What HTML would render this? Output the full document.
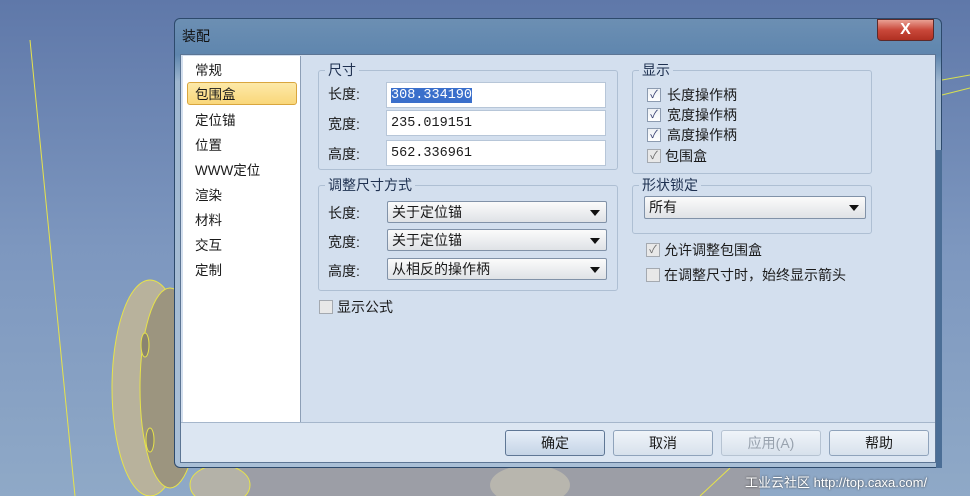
<!DOCTYPE html><html><head><meta charset="utf-8"><style>
*{margin:0;padding:0;box-sizing:border-box}
body{width:970px;height:496px;overflow:hidden;position:relative;background:linear-gradient(180deg,#5f78a9 0%,#7d97bf 50%,#8fa9c7 100%);font-family:"Liberation Sans","Noto Sans CJK SC",sans-serif;font-size:14px;line-height:17px;color:#1a1a1a}
.a{position:absolute}
.frame{left:174px;top:18px;width:768px;height:450px;border:1px solid #2d4a6c;border-radius:6px;background:linear-gradient(180deg,#6c8fb3 0%,#5f86ae 8%,#9eb6cf 14%,#a9bfd6 100%)}
.client{left:180px;top:54px;width:756px;height:409px;background:#d3dfee;border:1px solid #5c7594}
.list{left:183px;top:56px;width:118px;height:366px;background:#fff;border-right:1px solid #8d9fb6}
.list div{position:absolute;left:12px;font-size:13.5px}
.sel{left:187px;top:82px;width:110px;height:23px;background:linear-gradient(#fde9a8,#f9d77a);border:1px solid #d9a63e;border-radius:3px}
.bottom{left:181px;top:422px;width:754px;height:40px;background:#dce6f2;border-top:1px solid #a5b6cb}
.grp{border:1px solid #aebfd3;border-radius:3px}
.lg{background:#d3dfee;padding:0 3px;font-size:14px;color:#1e3050}
.inp{background:#fff;border:1px solid #b7c6d8;font-family:"Liberation Mono","Noto Sans CJK SC",monospace;font-size:13.5px;padding:4px 0 0 4px;height:26px}
.cmb{height:22px;border:1px solid #8192a8;border-radius:2px;background:linear-gradient(#fbfbfb,#dfe2e6);font-size:14px;padding:2px 0 0 4px}
.cmb:after{content:"";position:absolute;right:6px;top:8px;border:5px solid transparent;border-top:6px solid #111;border-bottom:0}
.cb{width:14px;height:14px;border:1px solid #8c9bb0;background:linear-gradient(#eef1f5,#fff);font-size:11px;line-height:12px;text-align:center;color:#333b6e}
.cb.g{color:#6a6a6a;border-color:#a4a9b0;background:#e8e8e8}
.btn{top:430px;height:26px;border:1px solid #8fa3bb;border-radius:3px;background:linear-gradient(#f0f4f9,#d7e1ec);text-align:center;line-height:24px;font-size:14px}
</style></head><body>
<svg class="a" style="left:0;top:0" width="970" height="496">
<polyline points="30,40 75,496" stroke="#e7e34a" fill="none"/>
<polyline points="942,80 970,75" stroke="#d8e050" fill="none"/>
<polyline points="942,95 970,88" stroke="#d8e050" fill="none"/>
<ellipse cx="150" cy="388" rx="38" ry="108" fill="#b8b29c" stroke="#e7e34a"/>
<ellipse cx="170" cy="388" rx="30" ry="100" fill="#9c957f" stroke="#e7e34a"/>
<ellipse cx="145" cy="345" rx="4" ry="12" fill="#8a8470" stroke="#e7e34a"/>
<ellipse cx="150" cy="440" rx="4" ry="12" fill="#8a8470" stroke="#e7e34a"/>
<rect x="200" y="466" width="560" height="30" fill="#9c9ea6"/>
<ellipse cx="220" cy="485" rx="30" ry="20" fill="#b4b2a8" stroke="#e7e34a"/>
<ellipse cx="530" cy="485" rx="40" ry="20" fill="#b8b6ae"/>
<polyline points="700,496 730,468" stroke="#e7e34a" fill="none"/>
</svg>
<div class="a frame"></div>
<div class="a" style="left:182px;top:28px;font-size:14px;color:#111">装配</div>
<div class="a" style="left:877px;top:19px;width:57px;height:22px;border:1px solid #5b2a2a;border-radius:0 0 4px 4px;background:linear-gradient(#e9a093,#c9483a 50%,#b03022);color:#fff;text-align:center;font-weight:bold;font-size:16px;line-height:20px">X</div>
<div class="a client"></div>
<div class="a" style="left:936px;top:150px;width:6px;height:318px;background:#4b6e96"></div>
<div class="a list">
<div style="top:6px">常规</div><div style="top:56px">定位锚</div><div style="top:81px">位置</div><div style="top:106px">WWW定位</div><div style="top:131px">渲染</div><div style="top:156px">材料</div><div style="top:181px">交互</div><div style="top:206px">定制</div></div>
<div class="a sel"></div><div class="a" style="left:195px;top:86px;font-size:13.5px">包围盒</div>
<div class="a bottom"></div>

<div class="a grp" style="left:318px;top:70px;width:300px;height:100px"></div>
<div class="a lg" style="left:325px;top:62px">尺寸</div>
<div class="a" style="left:328px;top:86px">长度:</div>
<div class="a" style="left:328px;top:116px">宽度:</div>
<div class="a" style="left:328px;top:146px">高度:</div>
<div class="a inp" style="left:386px;top:82px;width:220px"><span style="background:#3a6fcb;color:#fff">308.334190</span></div>
<div class="a inp" style="left:386px;top:110px;width:220px">235.019151</div>
<div class="a inp" style="left:386px;top:140px;width:220px">562.336961</div>

<div class="a grp" style="left:318px;top:185px;width:300px;height:106px"></div>
<div class="a lg" style="left:325px;top:177px">调整尺寸方式</div>
<div class="a" style="left:328px;top:205px">长度:</div>
<div class="a" style="left:328px;top:234px">宽度:</div>
<div class="a" style="left:328px;top:263px">高度:</div>
<div class="a cmb" style="left:387px;top:201px;width:220px">关于定位锚</div>
<div class="a cmb" style="left:387px;top:229px;width:220px">关于定位锚</div>
<div class="a cmb" style="left:387px;top:258px;width:220px">从相反的操作柄</div>
<div class="a cb g" style="left:319px;top:300px"></div><div class="a" style="left:337px;top:299px">显示公式</div>

<div class="a grp" style="left:632px;top:70px;width:240px;height:104px"></div>
<div class="a lg" style="left:639px;top:62px">显示</div>
<div class="a cb" style="left:647px;top:88px">✓</div><div class="a" style="left:667px;top:87px">长度操作柄</div>
<div class="a cb" style="left:647px;top:108px">✓</div><div class="a" style="left:667px;top:107px">宽度操作柄</div>
<div class="a cb" style="left:647px;top:128px">✓</div><div class="a" style="left:667px;top:127px">高度操作柄</div>
<div class="a cb g" style="left:647px;top:149px">✓</div><div class="a" style="left:665px;top:148px">包围盒</div>
<div class="a grp" style="left:632px;top:185px;width:240px;height:49px"></div>
<div class="a lg" style="left:639px;top:177px">形状锁定</div>
<div class="a cmb" style="left:644px;top:196px;width:222px;height:23px">所有</div>
<div class="a cb g" style="left:646px;top:243px">✓</div><div class="a" style="left:664px;top:242px">允许调整包围盒</div>
<div class="a cb g" style="left:646px;top:268px"></div><div class="a" style="left:664px;top:267px">在调整尺寸时，始终显示箭头</div>

<div class="a btn" style="left:505px;width:100px;border-color:#5f7795;background:linear-gradient(#e6eef8,#c5d4e6)">确定</div>
<div class="a btn" style="left:613px;width:100px">取消</div>
<div class="a btn" style="left:721px;width:100px;color:#98a2ae;border-color:#b6c3d2">应用(A)</div>
<div class="a btn" style="left:829px;width:100px">帮助</div>
<div class="a" style="left:745px;top:474px;font-size:13px;color:#fff;text-shadow:0 0 2px #333">工业云社区 http://top.caxa.com/</div>
</body></html>
